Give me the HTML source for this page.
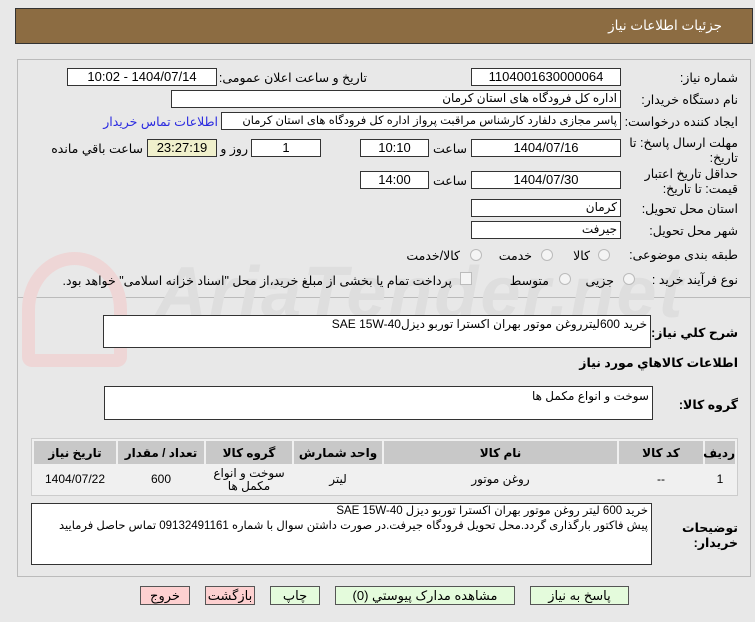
<!DOCTYPE html>
<html><head><meta charset="utf-8"><style>
*{box-sizing:border-box;margin:0;padding:0}
body{width:755px;height:622px;background:#e8e8e8;font-family:"Liberation Sans","DejaVu Sans",sans-serif;font-size:12px;color:#000;position:relative;overflow:hidden}
.a{position:absolute}
.l{position:absolute;direction:rtl;white-space:nowrap;font-size:12.5px}
.in{position:absolute;background:#fff;border:1px solid #333;direction:rtl;text-align:center;font-size:13px;white-space:nowrap;overflow:hidden}
.r{text-align:right;padding-right:3px;font-size:12px}
.rad{position:absolute;width:12px;height:12px;border:1px solid #bbb;border-radius:50%;background:#f4f4f4}
.btn{position:absolute;border:1px solid #555;text-align:center;font-size:13px;direction:rtl;line-height:17px;height:19px}
table{position:absolute;border-collapse:separate;border-spacing:2px;background:#f0f0f0;border:1px solid #ccc;direction:rtl;table-layout:fixed}
td,th{text-align:center;font-size:12px}
th{background:#c8c8c8;height:23px;font-weight:bold}
td{background:#f0f0f0;height:27px;line-height:13px}
.b{font-weight:bold}
</style></head><body>
<div class="a" style="left:15px;top:8px;width:738px;height:36px;background:#8c6c42;border:1px solid #333"></div>
<div class="l" style="right:33px;top:18px;color:#fff;font-size:13.5px">جزئیات اطلاعات نیاز</div>

<div class="a" style="left:17px;top:59px;width:734px;height:518px;border:1px solid #bbb"></div>
<div class="a" style="left:18px;top:297px;width:732px;height:1px;background:#bbb"></div>

<!-- watermark -->
<div class="a" style="left:22px;top:252px;width:105px;height:115px;border:13px solid #eed6d6;border-radius:50% 50% 10px 10px"></div>
<div class="a" style="left:155px;top:252px;font-size:72px;font-weight:bold;color:#dedede;font-style:italic;letter-spacing:2px">AriaTender.net</div>

<div class="l" style="right:17px;top:70px">شماره نیاز:</div>
<div class="in" style="left:471px;top:68px;width:150px;height:18px">1104001630000064</div>
<div class="l" style="right:388px;top:70px">تاریخ و ساعت اعلان عمومی:</div>
<div class="in" style="left:67px;top:68px;width:150px;height:18px">1404/07/14 - 10:02</div>

<div class="l" style="right:17px;top:92px">نام دستگاه خریدار:</div>
<div class="in r" style="left:171px;top:90px;width:450px;height:18px">اداره کل فرودگاه های استان کرمان</div>

<div class="l" style="right:17px;top:114px">ایجاد کننده درخواست:</div>
<div class="in r" style="left:221px;top:112px;width:400px;height:18px;font-size:11.5px">پاسر مجازی دلفارد کارشناس مراقبت پرواز اداره کل فرودگاه های استان کرمان</div>
<div class="l" style="right:537px;top:114px;color:#2a2ae0">اطلاعات تماس خریدار</div>

<div class="l" style="right:17px;top:136px;line-height:15px;text-align:right">مهلت ارسال پاسخ: تا<br>تاریخ:</div>
<div class="in" style="left:471px;top:139px;width:150px;height:18px">1404/07/16</div>
<div class="l" style="right:288px;top:141px">ساعت</div>
<div class="in" style="left:360px;top:139px;width:69px;height:18px">10:10</div>
<div class="in" style="left:251px;top:139px;width:70px;height:18px">1</div>
<div class="l" style="right:507px;top:141px">روز و</div>
<div class="in" style="left:147px;top:139px;width:70px;height:18px;background:#f0f0cc">23:27:19</div>
<div class="l" style="right:612px;top:141px">ساعت باقي مانده</div>

<div class="l" style="right:17px;top:167px;line-height:15px;text-align:right">حداقل تاریخ اعتبار<br>قیمت: تا تاریخ:</div>
<div class="in" style="left:471px;top:171px;width:150px;height:18px">1404/07/30</div>
<div class="l" style="right:288px;top:173px">ساعت</div>
<div class="in" style="left:360px;top:171px;width:69px;height:18px">14:00</div>

<div class="l" style="right:17px;top:201px">استان محل تحویل:</div>
<div class="in r" style="left:471px;top:199px;width:150px;height:18px">کرمان</div>
<div class="l" style="right:17px;top:223px">شهر محل تحویل:</div>
<div class="in r" style="left:471px;top:221px;width:150px;height:18px">جیرفت</div>

<div class="l" style="right:17px;top:247px">طبقه بندی موضوعی:</div>
<div class="rad" style="left:598px;top:249px"></div><div class="l" style="right:165px;top:248px">کالا</div>
<div class="rad" style="left:541px;top:249px"></div><div class="l" style="right:223px;top:248px">خدمت</div>
<div class="rad" style="left:470px;top:249px"></div><div class="l" style="right:295px;top:248px">کالا/خدمت</div>

<div class="l" style="right:17px;top:272px">نوع فرآیند خرید :</div>
<div class="rad" style="left:623px;top:273px"></div><div class="l" style="right:141px;top:273px">جزیی</div>
<div class="rad" style="left:559px;top:273px"></div><div class="l" style="right:206px;top:273px">متوسط</div>
<div class="a" style="left:460px;top:272px;width:12px;height:13px;border:1px solid #bbb;background:#f4f4f4"></div>
<div class="l" style="right:303px;top:273px">پرداخت تمام یا بخشی از مبلغ خرید،از محل "اسناد خزانه اسلامی" خواهد بود.</div>

<div class="l b" style="right:17px;top:325px">شرح کلي نیاز:</div>
<div class="in r" style="left:103px;top:315px;width:548px;height:33px;text-align:right;line-height:16px">خرید 600لیترروغن موتور بهران اکسترا توربو دیزلSAE 15W-40</div>
<div class="l b" style="right:17px;top:355px">اطلاعات کالاهاي مورد نیاز</div>

<div class="l b" style="right:17px;top:397px">گروه کالا:</div>
<div class="in r" style="left:104px;top:386px;width:549px;height:34px;text-align:right;line-height:18px">سوخت و انواع مکمل ها</div>

<table style="left:31px;top:438px;width:707px">
<colgroup><col style="width:30px"><col style="width:84px"><col style="width:233px"><col style="width:88px"><col style="width:86px"><col style="width:86px"><col></colgroup>
<tr><th>ردیف</th><th>کد کالا</th><th>نام کالا</th><th>واحد شمارش</th><th>گروه کالا</th><th>تعداد / مقدار</th><th>تاریخ نیاز</th></tr>
<tr><td>1</td><td>--</td><td>روغن موتور</td><td>لیتر</td><td>سوخت و انواع<br>مکمل ها</td><td>600</td><td>1404/07/22</td></tr>
</table>

<div class="l b" style="right:17px;top:521px;line-height:15px;text-align:right">توضیحات<br>خریدار:</div>
<div class="in r" style="left:31px;top:503px;width:621px;height:62px;text-align:right;line-height:15px;font-size:11.5px">خرید 600 لیتر روغن موتور بهران اکسترا توربو دیزل SAE 15W-40<br>پیش فاکتور بارگذاری گردد.محل تحویل فرودگاه جیرفت.در صورت داشتن سوال با شماره 09132491161 تماس حاصل فرمایید</div>

<div class="btn" style="left:530px;top:586px;width:99px;background:#e4fbdc">پاسخ به نیاز</div>
<div class="btn" style="left:335px;top:586px;width:180px;background:#e4fbdc">مشاهده مدارک پیوستي (0)</div>
<div class="btn" style="left:270px;top:586px;width:50px;background:#e4fbdc">چاپ</div>
<div class="btn" style="left:205px;top:586px;width:50px;background:#fdd0d0">بازگشت</div>
<div class="btn" style="left:140px;top:586px;width:50px;background:#fdd0d0">خروج</div>
</body></html>
